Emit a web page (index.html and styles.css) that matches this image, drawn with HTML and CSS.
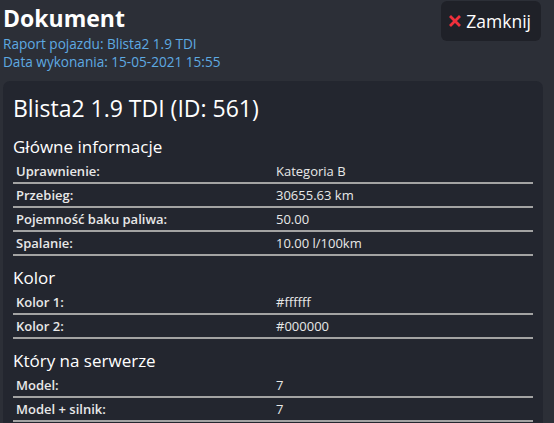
FILE: index.html
```html
<!DOCTYPE html>
<html lang="pl">
<head>
<meta charset="utf-8">
<link rel="stylesheet" href="styles.css">
</head>
<body>
<div class="page">
  <header class="header">
    <div class="heading">
      <h1 class="doc-title">Dokument</h1>
      <div class="sub">Raport pojazdu: Blista2 1.9 TDI</div>
      <div class="sub">Data wykonania: 15-05-2021 15:55</div>
    </div>
    <button class="close-btn"><svg class="x-icon" viewBox="0 0 12 12" width="12" height="12"><path d="M2 2 L10 10 M10 2 L2 10" stroke="#f0303c" stroke-width="2.8" stroke-linecap="square"/></svg>Zamknij</button>
  </header>
  <section class="card">
    <h2 class="card-title">Blista2 1.9 TDI (ID: 561)</h2>
    <h3 class="section-title">Główne informacje</h3>
    <table class="info">
      <tr><td>Uprawnienie:</td><td>Kategoria B</td></tr>
      <tr><td>Przebieg:</td><td>30655.63 km</td></tr>
      <tr><td>Pojemność baku paliwa:</td><td>50.00</td></tr>
      <tr><td>Spalanie:</td><td>10.00 l/100km</td></tr>
    </table>
    <h3 class="section-title">Kolor</h3>
    <table class="info">
      <tr><td>Kolor 1:</td><td>#ffffff</td></tr>
      <tr><td>Kolor 2:</td><td>#000000</td></tr>
    </table>
    <h3 class="section-title">Który na serwerze</h3>
    <table class="info">
      <tr><td>Model:</td><td>7</td></tr>
      <tr><td>Model + silnik:</td><td>7</td></tr>
    </table>
  </section>
</div>
</body>
</html>
```
FILE: styles.css
```css
* { box-sizing: border-box; }
html, body { margin: 0; padding: 0; }
body {
  background: #2c2f37;
  font-family: "Open Sans", sans-serif;
  color: #e8e8e8;
  width: 554px;
  height: 423px;
  overflow: hidden;
}
.page {
  padding: 1px 11px 0 3px;
  height: 423px;
  overflow: hidden;
}
.header {
  display: flex;
  justify-content: space-between;
  align-items: flex-start;
}
.doc-title {
  margin: 0;
  font-size: 23px;
  font-weight: 700;
  line-height: 34px;
  color: #ffffff;
}
.sub {
  font-size: 13.6px;
  line-height: 18px;
  color: #5eaae2;
}
.close-btn {
  display: flex;
  align-items: center;
  gap: 5px;
  height: 40px;
  margin-right: 2px;
  padding: 0 10px 0 8px;
  background: #1f2128;
  border: none;
  border-radius: 6px;
  color: #ffffff;
  font-family: "Open Sans", sans-serif;
  font-size: 17.5px;
}
.x-icon { display: block; }
.card {
  margin-top: 10px;
  background: #23262f;
  border-radius: 7px;
  padding: 10px 10px 10px 10px;
  height: 362px;
}
.card-title {
  margin: 0;
  font-size: 23px;
  font-weight: 400;
  line-height: 34px;
  color: #ffffff;
}
.section-title {
  margin: 10px 0 0;
  font-size: 17px;
  font-weight: 400;
  line-height: 24px;
  color: #ffffff;
}
.info {
  width: 100%;
  border-collapse: collapse;
  font-size: 13px;
}
.info td {
  width: 50%;
  padding: 0 3px;
  height: 24px;
  border-bottom: 2px solid #a3a3a3;
  line-height: 20px;
}
.info td:first-child { font-weight: 600; }
```
